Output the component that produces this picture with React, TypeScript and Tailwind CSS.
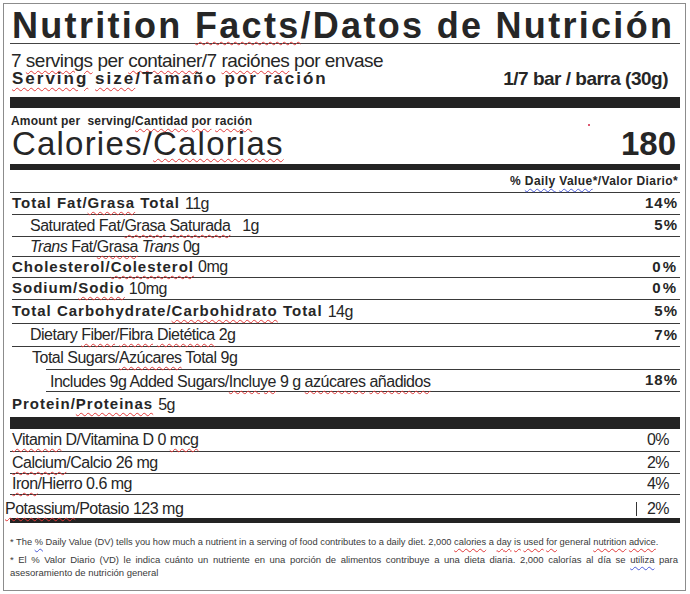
import React from "react";

const sq = "underline decoration-wavy decoration-[#e23a3a] decoration-1 underline-offset-[3px]";
const bsq = "underline decoration-wavy decoration-[#4a5ad8] decoration-1 underline-offset-[3px]";
const narrow = "font-['Liberation_Sans',Arial,sans-serif] tracking-[-0.5px]";
const wide = "font-['Liberation_Sans',Arial,sans-serif]";

function Row({
  h,
  children,
  pct,
  border = true,
  pctClass = "font-bold tracking-[1px]",
}: {
  h: string;
  children: React.ReactNode;
  pct?: string;
  border?: boolean;
  pctClass?: string;
}) {
  return (
    <div className={`${h} flex items-center justify-between ${border ? "border-b border-[#3a3a3a]" : ""}`}>
      <div className="flex items-center whitespace-nowrap">{children}</div>
      {pct && <div className={`${wide} text-[15px] pr-[2px] ${pctClass}`}>{pct}</div>}
    </div>
  );
}

export default function App() {
  return (
    <div className={`w-[690px] h-[594px] bg-white pt-[3px] pl-[3px] ${wide} text-[#262626]`}>
      <div className="w-[683px] h-[588px] border border-[#8c8c8c] pl-[6px] pr-[5px]">
        {/* Title */}
        <div className="h-[40px] border-b border-[#444] pt-[3px]">
          <div className="text-[36px] font-bold leading-[38px] tracking-[2.3px] whitespace-nowrap pl-[2px]">
            Nutrition <span className={sq}>Facts</span>/Datos de Nutrición
          </div>
        </div>
        {/* Servings */}
        <div className={`mt-[7px] h-[20px] leading-[20px] text-[19px] ${narrow} pl-[1px]`}>
          7 <span className={sq}>servings</span> per <span className={sq}>container</span>/7{" "}
          <span className={sq}>raciónes</span> por envase
        </div>
        <div className="h-[18px] leading-[16px] flex justify-between pl-[2px] pr-[12px]">
          <span className="text-[17px] font-bold tracking-[2px]">
            <span className={sq}>Serving</span> <span className={sq}>size</span>/Tamaño por ración
          </span>
          <span className={`text-[19px] font-bold ${narrow}`}>1/7 bar / barra (30g)</span>
        </div>
        <div className="mt-[8px] h-[11px] bg-[#232323]" />
        {/* Amount per serving */}
        <div className={`mt-[7px] h-[13px] leading-[13px] text-[12px] font-bold ${wide} tracking-[0.2px] pl-[1px] relative`}>
          Amount per&nbsp; serving/<span className={sq}>Cantidad</span> <span className={sq}>por</span>{" "}
          <span className={sq}>ración</span>
          <span className="absolute left-[578px] top-[9px] w-[2px] h-[2px] rounded-full bg-[#d02040]" />
        </div>
        <div className="h-[31px] leading-[31px] flex justify-between pl-[2px] pr-[4px]">
          <span className="text-[33px] tracking-[1.2px]">
            Calories/<span className={sq}>Calorias</span>
          </span>
          <span className="text-[33px] font-bold">180</span>
        </div>
        <div className="mt-[5px] h-[6px] bg-[#232323]" />
        <div className="h-[23px] pt-[5px] leading-[13px] text-right text-[12px] font-bold tracking-[0.4px] border-b border-[#3a3a3a] pr-[2px]">
          <span>
            % <span className={bsq}>Daily</span> <span className={bsq}>Value</span>*/Valor Diario*
          </span>
        </div>

        {/* Macro rows */}
        <div className="pl-[2px]">
          <Row h="h-[22px]" pct="14%">
            <span className="text-[15px] font-bold tracking-[1px]">
              Total Fat/<span className={sq}>Grasa</span> Total
            </span>
            <span className={`${narrow} text-[16px] ml-[5px]`}>11g</span>
          </Row>
          <Row h="h-[22px]" pct="5%">
            <span className={`${narrow} text-[16px] ml-[18px]`}>
              Saturated Fat/<span className={sq}>Grasa</span> <span className={sq}>Saturada</span>&nbsp;&nbsp; 1g
            </span>
          </Row>
          <Row h="h-[20px]">
            <span className={`${narrow} text-[16px] ml-[18px]`}>
              <i>Trans</i> Fat/<span className={sq}>Grasa</span> <i>Trans</i> 0g
            </span>
          </Row>
          <Row h="h-[21px]" pct="0%" pctClass="font-bold tracking-[2px]">
            <span className="text-[15px] font-bold tracking-[1px]">
              Cholesterol/<span className={sq}>Colesterol</span>
            </span>
            <span className={`${narrow} text-[16px] ml-[4px]`}>0mg</span>
          </Row>
          <Row h="h-[22px]" pct="0%" pctClass="font-bold tracking-[2px]">
            <span className="text-[15px] font-bold tracking-[1px]">
              Sodium/<span className={sq}>Sodio</span>
            </span>
            <span className={`${narrow} text-[16px] ml-[4px]`}>10mg</span>
          </Row>
          <Row h="h-[24px]" pct="5%">
            <span className="text-[15px] font-bold tracking-[1px]">
              Total Carbohydrate/<span className={sq}>Carbohidrato</span> Total
            </span>
            <span className={`${narrow} text-[16px] ml-[5px]`}>14g</span>
          </Row>
          <Row h="h-[23px]" pct="7%">
            <span className={`${narrow} text-[16px] ml-[18px]`}>
              Dietary <span className={sq}>Fiber</span>/<span className={sq}>Fibra</span>{" "}
              <span className={sq}>Dietética</span> 2g
            </span>
          </Row>
          <div className="h-[22px] flex items-center">
            <span className={`${narrow} text-[16px] ml-[20px]`}>
              Total Sugars/<span className={sq}>Azúcares</span> Total 9g
            </span>
          </div>
          <div className="ml-[34px] border-t border-[#3a3a3a]">
            <Row h="h-[22px]" pct="18%">
              <span className={`${narrow} text-[16px] ml-[4px] mt-[2px]`}>
                Includes 9g Added Sugars/<span className={sq}>Incluye</span> 9 g{" "}
                <span className={sq}>azúcares</span> <span className={sq}>añadidos</span>
              </span>
            </Row>
          </div>
          <Row h="h-[25px]" border={false}>
            <span className="text-[15px] font-bold tracking-[1px]">
              Protein/<span className={sq}>Proteinas</span>
            </span>
            <span className={`${narrow} text-[16px] ml-[5px]`}>5g</span>
          </Row>
        </div>
        <div className="h-[12px] bg-[#232323]" />

        {/* Vitamins */}
        <div className={`${narrow} text-[16px]`}>
          <div className="h-[23px] flex items-center justify-between border-b border-[#3a3a3a] pl-[2px] pr-[11px]">
            <span>
              <span className={sq}>Vitamin</span> D/Vitamina D 0 <span className={sq}>mcg</span>
            </span>
            <span>0%</span>
          </div>
          <div className="h-[22px] flex items-center justify-between border-b border-[#3a3a3a] pl-[2px] pr-[11px]">
            <span>
              <span className={sq}>Calcium</span>/Calcio 26 mg
            </span>
            <span>2%</span>
          </div>
          <div className="h-[21px] flex items-center justify-between border-b border-[#3a3a3a] pl-[2px] pr-[11px]">
            <span>
              <span className={sq}>Iron</span>/Hierro 0.6 mg
            </span>
            <span>4%</span>
          </div>
          <div className="h-[23px] flex items-end justify-between pr-[11px] -ml-[5px]">
            <span className="leading-[18px]">
              <span className={sq}>Potassium</span>/Potasio 123 mg
            </span>
            <span className="leading-[18px] flex items-center">
              <span className="inline-block w-[1px] h-[14px] bg-[#333] mr-[10px]" />
              2%
            </span>
          </div>
        </div>
        <div className="h-[5px] bg-[#232323]" />

        {/* Footnotes */}
        <div className={`${wide} leading-[13px] text-[#3a3a3a] mt-[13px]`}>
          <p className="whitespace-nowrap text-[9.3px]">
            * The <span className={bsq}>%</span> Daily Value (DV) tells you how much a nutrient in a serving of food
            contributes to a daily diet. 2,000 <span className={sq}>calories</span> a <span className={sq}>day</span>{" "}
            <span className={sq}>is</span> <span className={sq}>used</span> <span className={sq}>for</span> general{" "}
            <span className={sq}>nutrition</span> <span className={sq}>advice</span>.
          </p>
          <p className="mt-[4px] text-[9.5px] text-justify pr-[2px]">
            * El % Valor Diario (VD) le indica cuánto un nutriente en una porción de alimentos contribuye a una dieta
            diaria. 2,000 calorías al día se <span className={bsq}>utiliza</span> para asesoramiento de nutrición general
          </p>
        </div>
      </div>
    </div>
  );
}
